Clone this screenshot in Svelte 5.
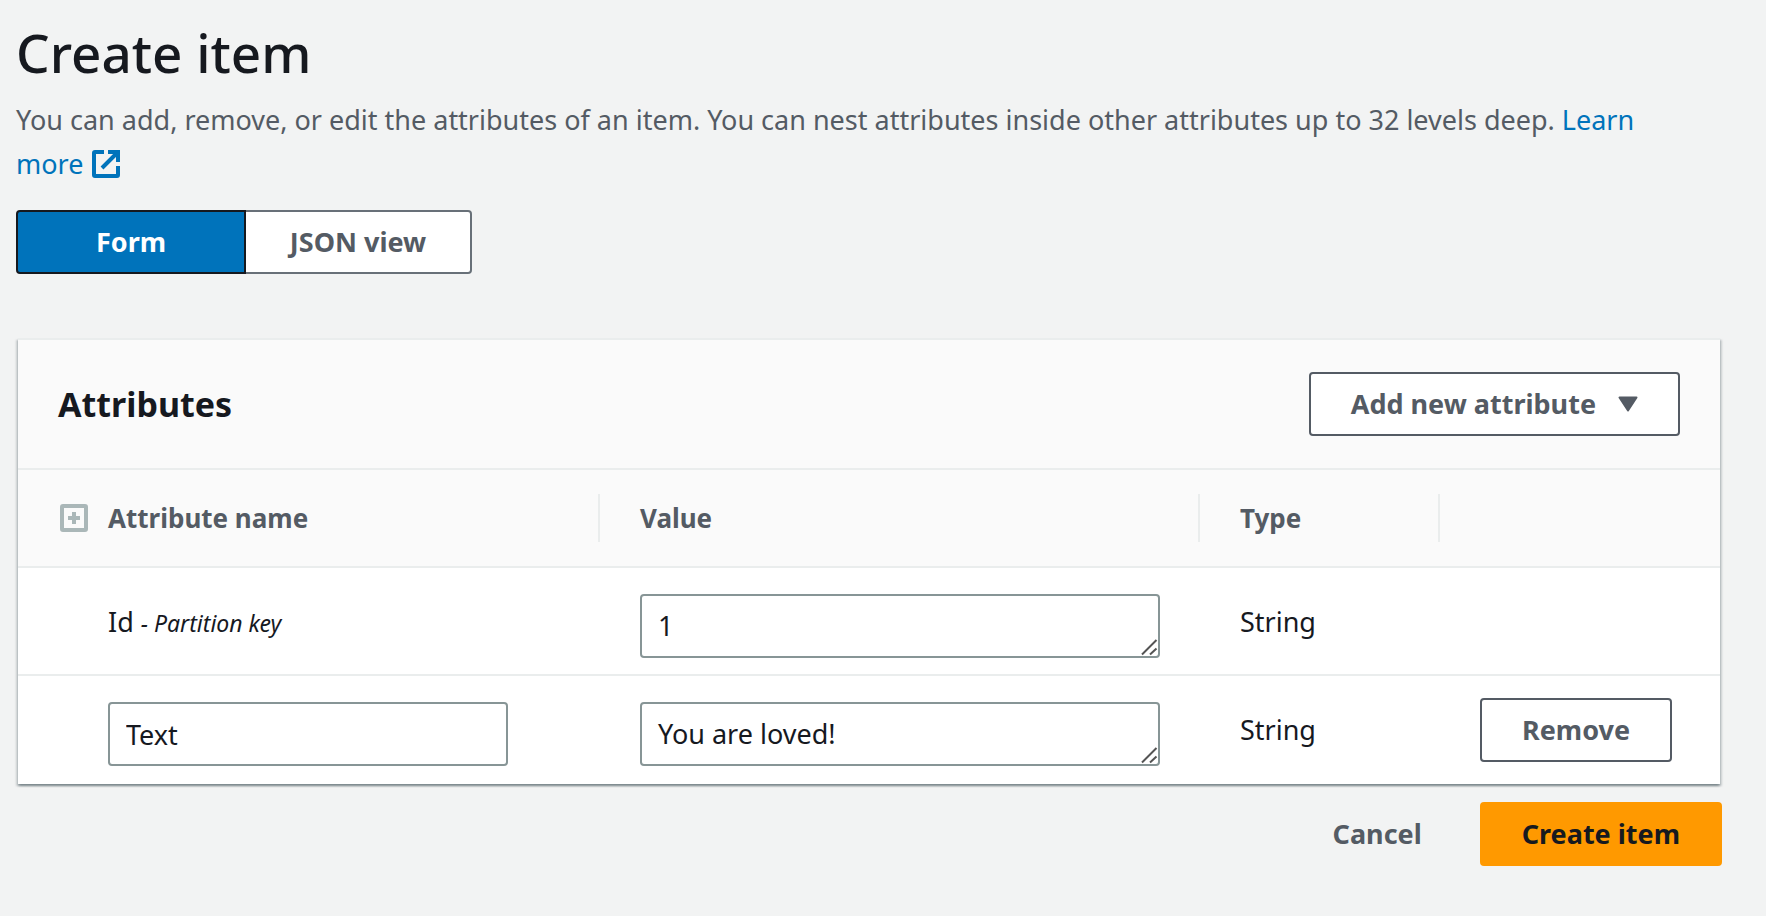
<script>
  let view = $state('form');
  let idValue = $state('1');
  let attributeName = $state('Text');
  let attributeValue = $state('You are loved!');
</script>

{#snippet grip()}
  <svg class="grip" viewBox="0 0 20 20" aria-hidden="true">
    <path d="M2 16.5 16.5 2M10 16.5l6.5-6" />
  </svg>
{/snippet}

<main>
  <h1>Create item</h1>
  <p class="description">
    You can add, remove, or edit the attributes of an item. You can nest attributes inside other attributes up to 32 levels deep.
    <a href="#learn">Learn <span class="keep">more
      <svg class="external" viewBox="0 0 28 28" aria-hidden="true">
        <path d="M12 2H3a1 1 0 0 0-1 1v22a1 1 0 0 0 1 1h22a1 1 0 0 0 1-1v-9M16 2h10v10M26 2 10 18" />
      </svg></span></a>
  </p>

  <div class="segments">
    <button class:selected={view === 'form'} onclick={() => (view = 'form')}>Form</button>
    <button class:selected={view === 'json'} onclick={() => (view = 'json')}>JSON view</button>
  </div>

  <section class="card">
    <header>
      <h2>Attributes</h2>
      <button class="btn">
        Add new attribute
        <svg class="caret" viewBox="0 0 20 16" aria-hidden="true">
          <path d="M1.5 1.5h17L10 14.5z" />
        </svg>
      </button>
    </header>
    <table>
      <colgroup>
        <col class="name" /><col class="value" /><col class="type" /><col />
      </colgroup>
      <thead>
        <tr>
          <th>
            <div class="heading">
              <svg class="expand" viewBox="0 0 28 28" aria-hidden="true">
                <rect x="2" y="2" width="24" height="24" rx="1" />
                <path d="M14 8v12M8 14h12" />
              </svg>
              Attribute name
            </div>
          </th>
          <th><div class="heading">Value</div></th>
          <th><div class="heading">Type</div></th>
          <th aria-label="Actions"></th>
        </tr>
      </thead>
      <tbody>
        <tr>
          <td class="indent">Id <em>- Partition key</em></td>
          <td><div class="field"><textarea rows="1" aria-label="Id value" bind:value={idValue}></textarea>{@render grip()}</div></td>
          <td>String</td>
          <td></td>
        </tr>
        <tr>
          <td class="indent"><div class="field"><input type="text" aria-label="Attribute name" bind:value={attributeName} /></div></td>
          <td><div class="field"><textarea rows="1" aria-label="Text value" bind:value={attributeValue}></textarea>{@render grip()}</div></td>
          <td>String</td>
          <td><button class="btn">Remove</button></td>
        </tr>
      </tbody>
    </table>
  </section>

  <footer>
    <button class="btn link">Cancel</button>
    <button class="btn primary">Create item</button>
  </footer>
</main>

<style>
  :global(body) {
    margin: 0;
    background: #f2f3f3;
  }
  * {
    box-sizing: border-box;
  }
  main {
    padding: 20px 44px 48px 16px;
    color: #16191f;
    font: 27px/44px 'Noto Sans', sans-serif;
  }
  button, input, textarea {
    font: inherit;
    color: inherit;
  }
  h1 {
    margin: 0;
    font-size: 53px;
    line-height: 66px;
    font-weight: 500;
  }
  .description {
    margin: 12px 0 24px;
    color: #545b64;
  }
  a {
    color: #0073bb;
    text-decoration: none;
  }
  .keep {
    white-space: nowrap;
  }
  svg {
    fill: none;
    stroke: currentColor;
    flex: none;
  }
  .external {
    width: 28px;
    height: 28px;
    margin-left: 2px;
    stroke-width: 4;
    vertical-align: -4px;
  }
  .segments {
    display: flex;
  }
  .segments button {
    height: 64px;
    min-width: 226px;
    padding: 0 40px;
    border: 2px solid #687078;
    background: #fff;
    color: #545b64;
    font-weight: 700;
    white-space: nowrap;
  }
  .segments button:first-child {
    min-width: 230px;
    border-radius: 4px 0 0 4px;
  }
  .segments button:last-child {
    border-left: 0;
    border-radius: 0 4px 4px 0;
  }
  .segments .selected {
    border-color: #16191f;
    background: #0073bb;
    color: #fff;
  }
  .card {
    margin: 64px 2px 18px;
    border-top: 2px solid #eaeded;
    background: #fff;
    box-shadow: 0 2px 2px rgba(0, 28, 36, 0.3), 2px 2px 2px rgba(0, 28, 36, 0.15), -2px 2px 2px rgba(0, 28, 36, 0.15);
  }
  header {
    display: flex;
    align-items: center;
    justify-content: space-between;
    padding: 32px 40px;
    border-bottom: 2px solid #eaeded;
    background: #fafafa;
  }
  h2 {
    margin: 0;
    font-size: 34px;
    line-height: 44px;
    font-weight: 700;
  }
  .btn {
    display: inline-flex;
    align-items: center;
    justify-content: center;
    gap: 22px;
    height: 64px;
    padding: 0 40px;
    border: 2px solid #545b64;
    border-radius: 4px;
    background: #fff;
    color: #545b64;
    font-weight: 700;
    white-space: nowrap;
  }
  .caret {
    width: 20px;
    height: 16px;
    fill: currentColor;
    stroke-width: 2;
    stroke-linejoin: round;
  }
  table {
    width: 100%;
    table-layout: fixed;
    border-collapse: separate;
    border-spacing: 0;
  }
  .name {
    width: 582px;
  }
  .value {
    width: 600px;
  }
  .type {
    width: 240px;
  }
  th {
    height: 98px;
    padding: 0;
    border-bottom: 2px solid #eaeded;
    background: #fafafa;
    color: #545b64;
    font-size: 26px;
    text-align: left;
  }
  .heading {
    display: flex;
    align-items: center;
    gap: 20px;
    height: 48px;
    padding-left: 40px;
    border-right: 2px solid #eaeded;
  }
  .expand {
    width: 28px;
    height: 28px;
    margin-left: 2px;
    stroke: #aab7b8;
    stroke-width: 4;
  }
  td {
    padding: 22px 40px 18px;
    line-height: 64px;
    vertical-align: top;
  }
  td.indent {
    padding-left: 90px;
    padding-right: 92px;
  }
  tbody tr:first-child td {
    padding-bottom: 16px;
    border-bottom: 2px solid #eaeded;
  }
  em {
    font-size: 23px;
    line-height: 44px;
  }
  .field {
    position: relative;
    display: flex;
    margin-top: 4px;
  }
  input, textarea {
    width: 100%;
    height: 64px;
    padding: 8px 16px;
    border: 2px solid #879596;
    border-radius: 4px;
    background: #fff;
    line-height: 44px;
    outline: none;
    resize: none;
    overflow: hidden;
  }
  .grip {
    position: absolute;
    right: 0;
    bottom: 0;
    width: 20px;
    height: 20px;
    color: #545454;
    stroke-width: 2;
    pointer-events: none;
  }
  footer {
    display: flex;
    justify-content: flex-end;
    gap: 16px;
  }
  .link {
    border-color: transparent;
    background: transparent;
  }
  .primary {
    border-color: #ff9900;
    background: #ff9900;
    color: #16191f;
  }
</style>
